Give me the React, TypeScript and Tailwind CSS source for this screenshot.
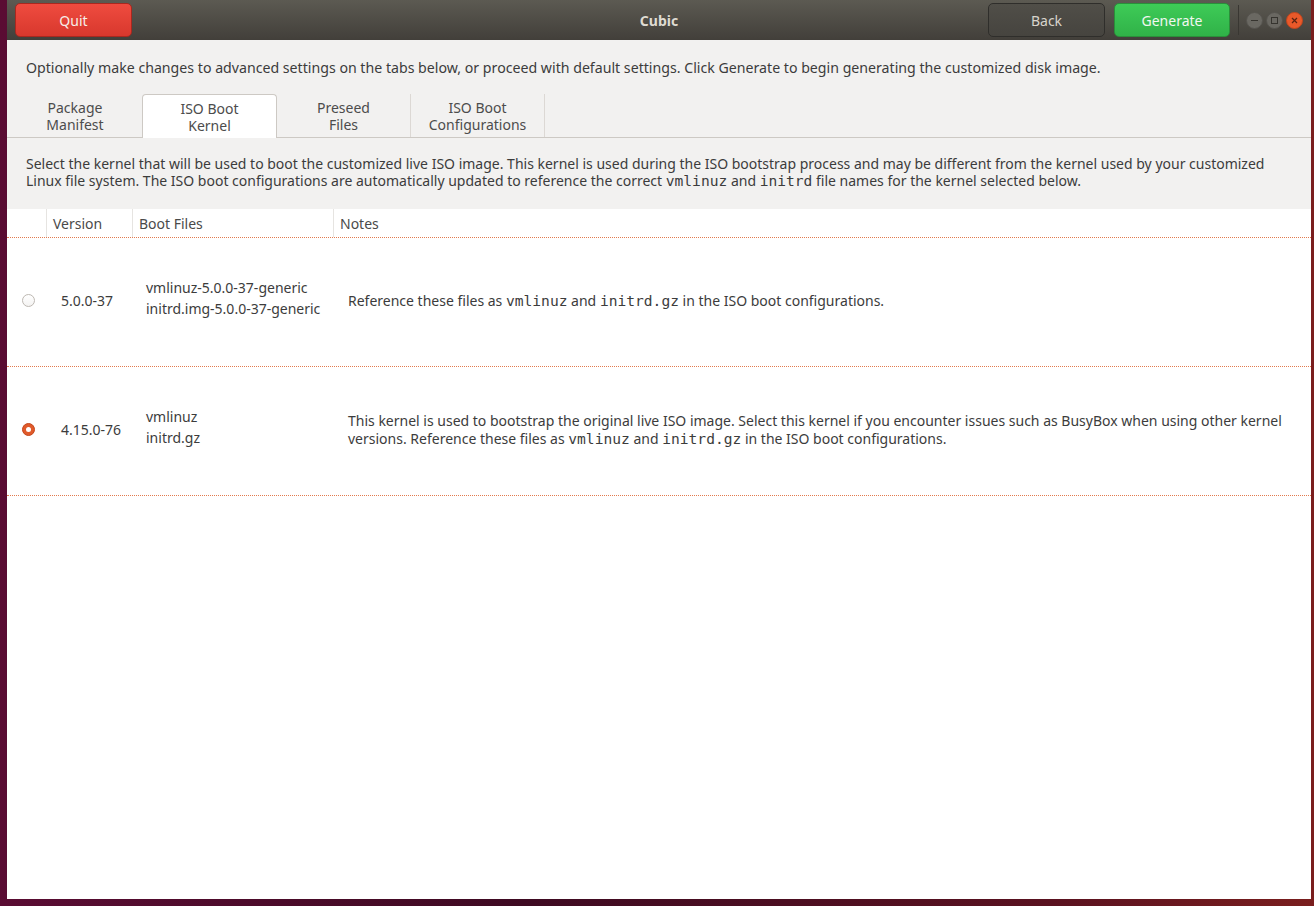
import React from "react";

const mono = "font-['DejaVu_Sans_Mono',monospace] text-[14.6px]";

function Radio({ checked }: { checked: boolean }) {
  if (checked) {
    return (
      <div className="w-[13px] h-[13px] rounded-full bg-[#e05a2a] border border-[#c4461b] flex items-center justify-center">
        <div className="w-[5px] h-[5px] rounded-full bg-white" />
      </div>
    );
  }
  return <div className="w-[13px] h-[13px] rounded-full bg-gradient-to-b from-white to-[#f4f3f2] border border-[#bdb8b2]" />;
}

function Tab({ l1, l2, active, sep }: { l1: string; l2: string; active?: boolean; sep?: boolean }) {
  return (
    <div
      className={
        "flex flex-col items-center justify-center leading-[17px] text-[14px] text-[#4c4c4c] " +
        (active
          ? "w-[135px] h-[44px] bg-white border border-[#cdc9c4] border-b-0 rounded-t-[4px] -mb-px"
          : sep
          ? "w-[134px] h-[43px] border-r border-[#dcd8d4]"
          : "w-[134px] h-[43px]")
      }
    >
      <span>{l1}</span>
      <span>{l2}</span>
    </div>
  );
}

export default function App() {
  return (
    <div className="w-[1314px] h-[906px] pl-[7px] pr-[3px] pb-[7px] bg-[linear-gradient(90deg,#5a0c33_0%,#3e0a22_40%,#5a1220_80%,#7a1e1e_100%)] font-['Noto_Sans',sans-serif]">
      <div className="h-full flex flex-col">
        {/* Title bar */}
        <div className="h-[40px] grid grid-cols-[1fr_auto_1fr] items-center bg-gradient-to-b from-[#5c5a52] to-[#423f3a] px-[8px]">
          <div className="flex">
            <div className="w-[117px] h-[34px] rounded-[5px] bg-gradient-to-b from-[#ef4b3f] to-[#d8382d] border border-[#a8281f] flex items-center justify-center text-[#f6efe9] text-[14px]">
              Quit
            </div>
          </div>
          <div className="text-[#dfdbd2] text-[14px] font-bold">Cubic</div>
          <div className="flex justify-end items-center">
            <div className="w-[117px] h-[34px] rounded-[5px] bg-gradient-to-b from-[#504e48] to-[#46443f] border border-[#2f2e2b] flex items-center justify-center text-[#d8d4cc] text-[14px]">
              Back
            </div>
            <div className="ml-[9px] w-[116px] h-[34px] rounded-[5px] bg-gradient-to-b from-[#3ecb57] to-[#30b248] border border-[#2a8f3a] flex items-center justify-center text-[#f1f7f0] text-[14px]">
              Generate
            </div>
            <div className="ml-[8px] w-px h-[30px] bg-[#393732]" />
            <div className="ml-[7px] flex items-center gap-[3px]">
              <div className="w-[17px] h-[17px] rounded-full bg-[#6a6862] border border-[#55534e] flex items-center justify-center">
                <div className="w-[7px] h-px bg-[#36342f]" />
              </div>
              <div className="w-[17px] h-[17px] rounded-full bg-[#6a6862] border border-[#55534e] flex items-center justify-center">
                <div className="w-[7px] h-[7px] border border-[#36342f]" />
              </div>
              <div className="w-[17px] h-[17px] rounded-full bg-[#e9592a] border border-[#c0461e] flex items-center justify-center">
                <svg width="7" height="7" viewBox="0 0 7 7">
                  <path d="M1 1L6 6M6 1L1 6" stroke="#5a2311" strokeWidth="1.2" />
                </svg>
              </div>
            </div>
          </div>
        </div>

        {/* Body */}
        <div className="flex-1 flex flex-col bg-[#f2f1f0] text-[#3c3c3c]">
          <div className="pt-[18px] pl-[19px] h-[54px] text-[14.17px] leading-[20px] whitespace-nowrap">
            Optionally make changes to advanced settings on the tabs below, or proceed with default settings. Click Generate to begin generating the customized disk image.
          </div>
          <div className="flex pl-[1px] border-b border-[#cdc9c4] h-[44px]">
            <Tab l1="Package" l2="Manifest" />
            <Tab l1="ISO Boot" l2="Kernel" active />
            <Tab l1="Preseed" l2="Files" sep />
            <Tab l1="ISO Boot" l2="Configurations" sep />
          </div>
          <div className="pt-[17px] pb-[20px] pl-[19px] text-[14px] leading-[17px] whitespace-nowrap">
            <div>
              Select the kernel that will be used to boot the customized live ISO image. This kernel is used during the ISO bootstrap process and may be different from the kernel used by your customized
            </div>
            <div>
              Linux file system. The ISO boot configurations are automatically updated to reference the correct <span className={mono}>vmlinuz</span> and{" "}
              <span className={mono}>initrd</span> file names for the kernel selected below.
            </div>
          </div>

          {/* Table */}
          <div className="flex-1 bg-white flex flex-col text-[14px]">
            <div className="h-[29px] flex items-stretch border-b border-dotted border-[#e27a4e] text-[#4a4a4a]">
              <div className="w-[40px] border-r border-[#e6e4e1]" />
              <div className="w-[86px] pl-[6px] flex items-center border-r border-[#e6e4e1]">Version</div>
              <div className="w-[201px] pl-[6px] flex items-center border-r border-[#e6e4e1]">Boot Files</div>
              <div className="flex-1 pl-[6px] flex items-center">Notes</div>
            </div>

            <div className="h-[129px] pb-[3px] flex items-center border-b border-dotted border-[#e27a4e] leading-[21px]">
              <div className="w-[40px] flex justify-center pl-[2px]">
                <Radio checked={false} />
              </div>
              <div className="w-[86px] pl-[14px]">5.0.0-37</div>
              <div className="w-[201px] pl-[13px] mb-[5px]">
                <div>vmlinuz-5.0.0-37-generic</div>
                <div>initrd.img-5.0.0-37-generic</div>
              </div>
              <div className="flex-1 pl-[14px] whitespace-nowrap">
                Reference these files as <span className={mono}>vmlinuz</span> and <span className={mono}>initrd.gz</span> in the ISO boot configurations.
              </div>
            </div>

            <div className="h-[129px] pb-[3px] flex items-center border-b border-dotted border-[#e27a4e] leading-[21px]">
              <div className="w-[40px] flex justify-center pl-[2px]">
                <Radio checked />
              </div>
              <div className="w-[86px] pl-[14px]">4.15.0-76</div>
              <div className="w-[201px] pl-[13px] mb-[5px]">
                <div>vmlinuz</div>
                <div>initrd.gz</div>
              </div>
              <div className="flex-1 pl-[14px] whitespace-nowrap leading-[18px]">
                <div>
                  This kernel is used to bootstrap the original live ISO image. Select this kernel if you encounter issues such as BusyBox when using other kernel
                </div>
                <div>
                  versions. Reference these files as <span className={mono}>vmlinuz</span> and <span className={mono}>initrd.gz</span> in the ISO boot configurations.
                </div>
              </div>
            </div>
          </div>
        </div>
      </div>
    </div>
  );
}
